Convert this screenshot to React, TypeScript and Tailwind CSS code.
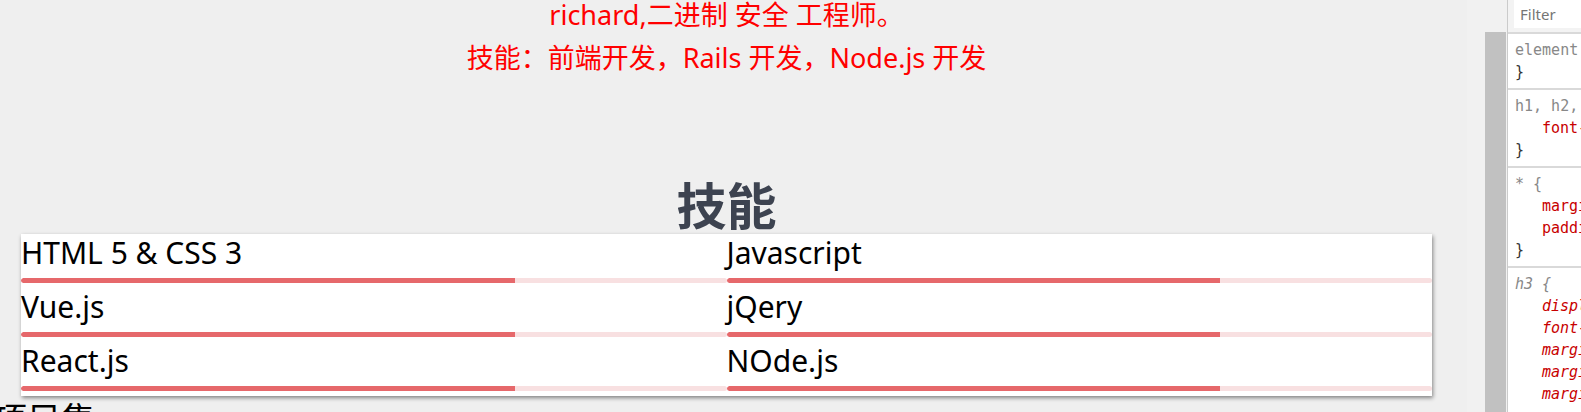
import React from 'react';

const skills = [
  { name: 'HTML 5 & CSS 3', level: 70 },
  { name: 'Javascript', level: 70 },
  { name: 'Vue.js', level: 70 },
  { name: 'jQery', level: 70 },
  { name: 'React.js', level: 70 },
  { name: 'NOde.js', level: 70 },
];

const rules = [
  { selector: 'element.style {', italic: false, props: [] as string[] },
  { selector: 'h1, h2, h3', italic: false, props: ['font-weight'] },
  { selector: '* {', italic: false, props: ['margin', 'padding'] },
  { selector: 'h3 {', italic: true, props: ['display', 'font-size', 'margin-block', 'margin-inline', 'margin-left'] },
];

const SkillItem = ({ name, level }: { name: string; level: number }) => (
  <div className="pb-[5px]">
    <div className="h-[40px] leading-[38px] text-[30px] text-black whitespace-nowrap">{name}</div>
    <div className="mt-[4px] h-[5px] rounded-full bg-[#f8e0e1] overflow-hidden">
      <div className="h-full rounded-l-full bg-[#e6686b]" style={{ width: `${level}%` }} />
    </div>
  </div>
);

const StylesPanel = () => (
  <aside className="flex-1 min-w-0 overflow-hidden bg-white font-['DejaVu_Sans_Mono',monospace] text-[15px] leading-[22px]">
    <div className="h-[32px] bg-[#f3f3f3] pl-[6px] pb-[4px]">
      <div className="h-[28px] bg-white pl-[6px] font-['Noto_Sans',sans-serif] text-[15px] leading-[28px] text-[#757575]">
        Filter
      </div>
    </div>
    {rules.map((rule, i) => (
      <div key={i} className={`whitespace-nowrap border-t-2 border-[#d9d9d9] pl-[7px] pt-[5px] pb-[5px] ${rule.italic ? 'italic' : ''}`}>
        <div className="text-[#888]">{rule.selector}</div>
        {rule.props.map(p => (
          <div key={p} className="pl-[27px] text-[#c80000]">{p}</div>
        ))}
        {!rule.italic && <div className="text-[#333]">{'}'}</div>}
      </div>
    ))}
  </aside>
);

export default function App() {
  return (
    <div className="flex h-[412px] w-[1581px] overflow-hidden bg-[#efefef] font-['Noto_Sans','Noto_Sans_CJK_SC',sans-serif]">
      <main className="w-[1467px] shrink-0 overflow-hidden">
        <div className="w-[1453px]">
          <p className="h-[30px] text-center text-[27px] leading-[30px] text-[#ff0000]">richard,二进制 安全 工程师。</p>
          <p className="mt-[13px] h-[30px] text-center text-[27px] leading-[30px] text-[#ff0000]">
            技能：前端开发，Rails 开发，Node.js 开发
          </p>
          <h3 className="mt-[101px] h-[60px] text-center font-['Noto_Sans_CJK_SC',sans-serif] text-[50px] font-bold leading-[58px] text-[#3d4350]">
            技能
          </h3>
          <div className="mx-[21px] grid grid-cols-2 bg-white shadow-[1px_2px_4px_rgba(0,0,0,0.45)]">
            {skills.map(s => (
              <SkillItem key={s.name} name={s.name} level={s.level} />
            ))}
          </div>
          <h3 className="ml-[-7px] mt-0 font-['Noto_Sans_CJK_SC',sans-serif] text-[34px] leading-[44px] text-black">项目集</h3>
        </div>
      </main>
      <div className="w-[18px] shrink-0 bg-[#f1f1f1]" />
      <div className="flex w-[21px] shrink-0 flex-col bg-[#f1f1f1]">
        <div className="h-[32px]" />
        <div className="flex-1 bg-[#c1c1c1]" />
      </div>
      <div className="w-px shrink-0 bg-[#f1f1f1]" />
      <div className="w-px shrink-0 bg-[#cbcbcb]" />
      <StylesPanel />
    </div>
  );
}
